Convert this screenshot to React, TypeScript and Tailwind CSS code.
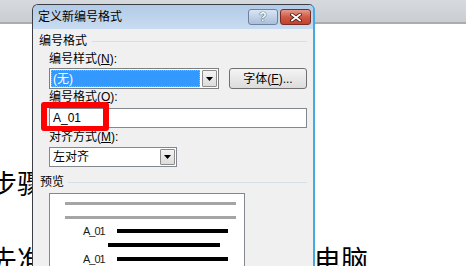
const ArrowBox = () => (
  <div className="m-px flex w-[15px] items-center justify-center rounded-[1px] border border-[#8c8c8c] bg-gradient-to-b from-[#f4f4f4] to-[#dcdcdc]">
    <svg width="7" height="4" viewBox="0 0 7 4">
      <path d="M0 0h7L3.5 4z" fill="#000" />
    </svg>
  </div>
);

const Label = ({ text, k, className = "" }: { text: string; k: string; className?: string }) => (
  <div className={"h-[14px] leading-[14px] ml-[16px] " + className}>
    {text}(<u>{k}</u>):
  </div>
);

const PreviewRow = ({ indent = false, label = true }: { indent?: boolean; label?: boolean }) => (
  <div className="flex h-[14px] items-center">
    {label ? (
      <>
        <span className="ml-[33px] w-[34px] text-[11px] tracking-[-1px] text-[#1a1a1a]">A_01</span>
        <div className="h-[4px] w-[111px] bg-black" />
      </>
    ) : (
      <div className={(indent ? "ml-[58px]" : "") + " h-[4px] w-[112px] bg-black"} />
    )}
  </div>
);

export default function App() {
  return (
    <div className="relative h-[266px] w-[466px] overflow-hidden bg-white font-['Liberation_Sans','Noto_Sans_CJK_SC',sans-serif] text-[12px] text-black">
      {/* window strip behind */}
      <div className="h-[24px] border-b-2 border-[#a9acb1] bg-gradient-to-b from-[#d6d9dd] to-[#caced2]" />

      {/* document text */}
      <div className="ml-[-10px] font-['Noto_Sans_CJK_SC',sans-serif] text-[27px] leading-[27px] whitespace-nowrap">
        <p className="mt-[145px]">步骤一：</p>
        <p className="mt-[49px]">先准备好一台能正常上网的电脑</p>
      </div>

      {/* dialog */}
      <div className="absolute left-[32px] top-[4px] flex h-[280px] w-[283px] flex-col rounded-t-[6px] border border-r-2 border-[#3b3f45] border-r-[#45a9e2] bg-[#f0f0f0]">
        <div className="flex h-[24px] items-start justify-between rounded-t-[5px] bg-gradient-to-b from-[#b2cbe7] to-[#c8dcf1]">
          <span className="ml-[5px] mt-[6px] leading-[13px]">定义新编号格式</span>
          <div className="mr-[2px] mt-[4px] flex gap-[2px]">
            <div className="flex h-[16px] w-[30px] items-center justify-center rounded-[3px] border border-[#6e819e] bg-gradient-to-b from-[#d9e5f3] to-[#a9bfd9]">
              <span className="text-[12px] font-bold leading-none text-white [text-shadow:0_0_1px_#2b3a50,0_0_1px_#2b3a50]">?</span>
            </div>
            <div className="flex h-[16px] w-[31px] items-center justify-center rounded-[3px] border border-[#7b2c22] bg-gradient-to-b from-[#e49a88] via-[#cf5a45] to-[#c2412c]">
              <svg width="12" height="9" viewBox="0 0 12 9">
                <path d="M2 1.5l8 6M10 1.5l-8 6" stroke="#3d1610" strokeWidth="3.4" strokeLinecap="square" />
                <path d="M2 1.5l8 6M10 1.5l-8 6" stroke="#fff" strokeWidth="1.8" strokeLinecap="square" />
              </svg>
            </div>
          </div>
        </div>

        {/* group header */}
        <div className="mt-[6px] flex h-[13px] items-center leading-[13px]">
          <span className="ml-[6px]">编号格式</span>
          <div className="ml-[5px] mr-[6px] h-px flex-1 bg-[#d5dfe5]" />
        </div>

        <Label text="编号样式" k="N" className="mt-[4px]" />
        <div className="mt-[2px] flex h-[21px]">
          <div className="ml-[16px] flex w-[170px] border border-[#7f7f7f] bg-white">
            <div className="m-px flex flex-1 items-center bg-[#3399ff] pl-[2px] text-white outline-1 outline-dotted outline-offset-[-1px] outline-[#f5a623]">
              (无)
            </div>
            <ArrowBox />
          </div>
          <div className="ml-[10px] flex w-[78px] items-center justify-center rounded-[3px] border border-[#707070] bg-gradient-to-b from-[#f4f4f4] to-[#dcdcdc]">
            字体(<u>F</u>)...
          </div>
        </div>

        <Label text="编号格式" k="O" className="mt-[1px]" />
        <div className="relative mt-[4px] ml-[16px] mr-[6px] h-[20px] border border-[#828790] bg-white pl-[3px] pt-[2px] leading-[14px]">
          A_01
          <div className="absolute left-[-9px] top-[-7px] h-[29px] w-[68px] rounded-[3px] border-[6px] border-b-[5px] border-[#ff0000]" />
        </div>

        <Label text="对齐方式" k="M" className="mt-[2px]" />
        <div className="mt-[3px] ml-[16px] flex h-[20px] w-[128px] border border-[#828790] bg-white">
          <div className="flex flex-1 items-center pl-[3px]">左对齐</div>
          <ArrowBox />
        </div>

        <div className="mt-[8px] flex h-[14px] items-center leading-[14px]">
          <span className="ml-[7px]">预览</span>
          <div className="ml-[4px] mr-[6px] h-px flex-1 bg-[#d5dfe5]" />
        </div>

        <div className="ml-[16px] mt-[4px] h-[90px] w-[196px] border border-[#828790] bg-white pt-[8px]">
          <div className="ml-[15px] h-[3px] w-[171px] bg-[#a5a5a5]" />
          <div className="ml-[15px] mt-[11px] h-[3px] w-[171px] bg-[#a5a5a5]" />
          <div className="mt-[5px]">
            <PreviewRow />
          </div>
          <PreviewRow label={false} indent />
          <PreviewRow />
        </div>
      </div>
    </div>
  );
}
